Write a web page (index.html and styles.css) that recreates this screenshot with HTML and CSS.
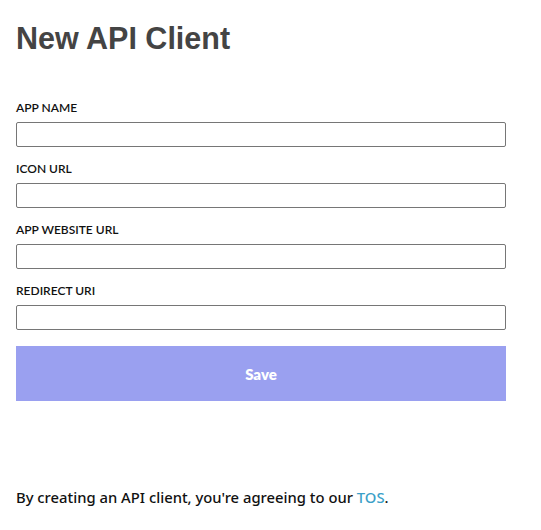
FILE: index.html
```html
<!DOCTYPE html>
<html>
<head>
<meta charset="utf-8">
<link rel="stylesheet" href="styles.css">
</head>
<body>
<div class="page">
  <h1 class="title">New API Client</h1>
  <form class="form">
    <div class="field">
      <label class="label">APP NAME</label>
      <input class="input" type="text">
    </div>
    <div class="field">
      <label class="label">ICON URL</label>
      <input class="input" type="text">
    </div>
    <div class="field">
      <label class="label">APP WEBSITE URL</label>
      <input class="input" type="text">
    </div>
    <div class="field">
      <label class="label">REDIRECT URI</label>
      <input class="input" type="text">
    </div>
    <button class="save" type="button">Save</button>
  </form>
  <p class="tos">By creating an API client, you're agreeing to our <a class="link" href="#">TOS</a>.</p>
</div>
</body>
</html>
```
FILE: styles.css
```css
html, body {
  margin: 0;
  padding: 0;
  background: #fff;
}
.page {
  padding: 0 16px;
  width: 490px;
}
.title {
  font-family: "Liberation Sans", Arial, sans-serif;
  font-weight: bold;
  font-size: 30.5px;
  line-height: 36px;
  color: #444;
  margin: 20px 0 0 0;
}
.form {
  display: flex;
  flex-direction: column;
  margin-top: 43px;
}
.field {
  display: flex;
  flex-direction: column;
  margin-bottom: 13px;
}
.label {
  font-family: "Lato", sans-serif;
  font-weight: 600;
  font-size: 12px;
  line-height: 14px;
  color: #111;
  padding-top: 2px;
  margin-bottom: 7px;
}
.input {
  box-sizing: border-box;
  width: 490px;
  height: 25px;
  margin: 0;
  border: 1px solid #767676;
  border-radius: 2px;
  background: #fff;
}
.save {
  margin-top: 3px;
  width: 490px;
  height: 55px;
  border: none;
  background: #9aa0f0;
  color: #fff;
  font-family: "Lato", sans-serif;
  font-weight: 800;
  font-size: 15px;
}
.tos {
  font-family: "Noto Sans", sans-serif;
  font-weight: 500;
  font-size: 14.8px;
  color: #111;
  margin: 86px 0 0 0;
}
.link {
  color: #3ba0c8;
  text-decoration: none;
}
```
